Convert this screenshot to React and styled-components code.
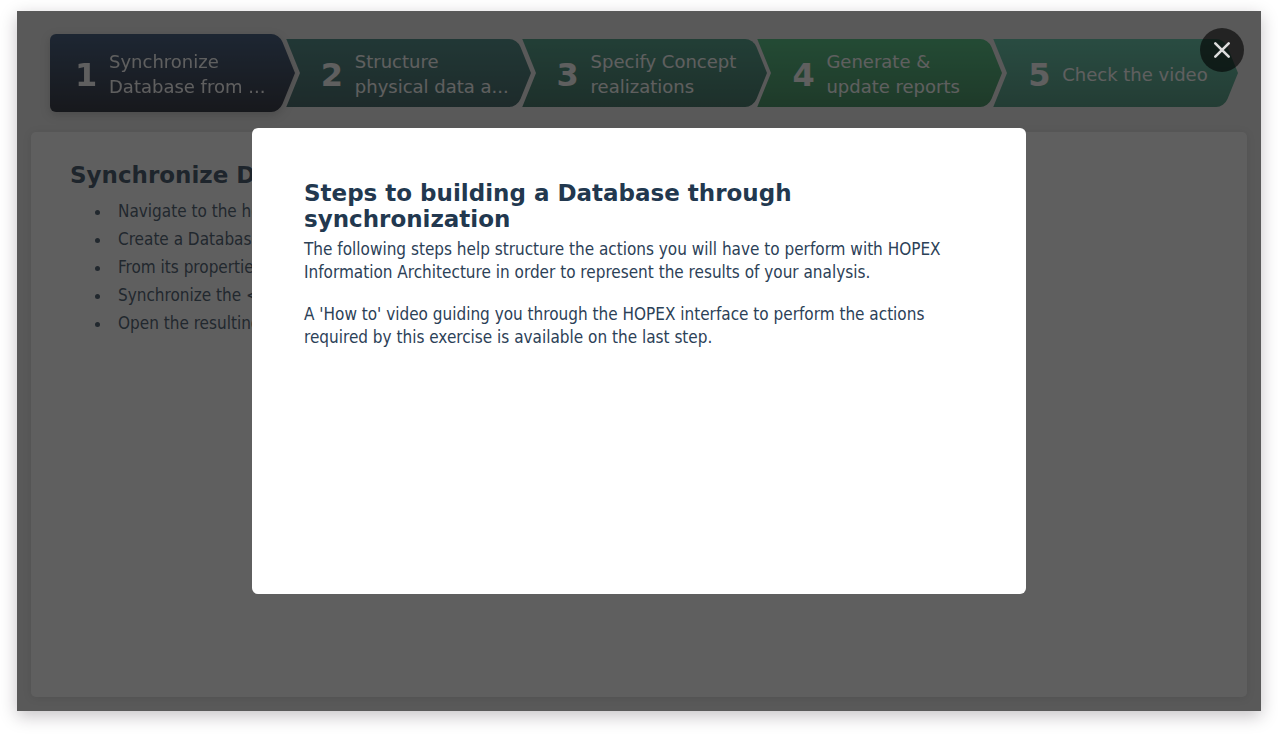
import React from "react";
import styled, { createGlobalStyle, css } from "styled-components";

const GlobalStyle = createGlobalStyle`
  * { box-sizing: border-box; }
  body {
    margin: 0;
    background: #fff;
    color: #22384f;
    font-family: Verdana, "DejaVu Sans", sans-serif;
  }
`;

const Page = styled.div`
  display: flex;
  min-height: 100vh;
  padding: 11px 17px 23px;
`;

const Frame = styled.main`
  position: relative;
  flex: 1;
  display: flex;
  flex-direction: column;
  gap: 20px;
  padding: 23px 14px 14px;
  background: #e9e9e9;
  box-shadow: 0 5px 16px rgba(30, 20, 30, 0.26);
`;

const Steps = styled.nav`
  display: grid;
  grid-template-columns: repeat(5, minmax(0, 1fr));
  align-items: center;
  gap: 5px;
  padding: 0 9px 0 33px;
`;

const half = css`
  content: "";
  position: absolute;
  z-index: -1;
  left: ${(p) => (p.$active ? "20px" : "0")};
  right: 0;
  height: 50%;
`;

const Step = styled.button`
  position: relative;
  isolation: isolate;
  height: ${(p) => (p.$active ? "78px" : "68px")};
  display: flex;
  align-items: center;
  gap: 12px;
  padding: 2px 20px 0 ${(p) => (p.$active ? "11px" : "21px")};
  border: 0;
  background: none;
  color: #fff;
  font: inherit;
  text-align: left;
  filter: ${(p) => (p.$active ? "drop-shadow(0 3px 5px rgba(0, 0, 0, 0.2))" : "none")};

  &::before {
    ${half}
    top: 0;
    background: linear-gradient(${(p) => p.$from}, ${(p) => p.$to}) 0 0 / 100% 200%;
    border-top-right-radius: 8px;
    transform: skewX(22deg);
    transform-origin: 0 100%;
  }

  &::after {
    ${half}
    bottom: 0;
    background: linear-gradient(${(p) => p.$from}, ${(p) => p.$to}) 0 100% / 100% 200%;
    border-bottom-right-radius: 8px;
    transform: skewX(-22deg);
    transform-origin: 0 0;
  }
`;

const Cap = styled.span`
  position: absolute;
  z-index: -1;
  inset: 0 auto 0 -14px;
  width: 48px;
  border-radius: 6px 0 0 6px;
  background: linear-gradient(${(p) => p.$from}, ${(p) => p.$to});
`;

const StepNumber = styled.span`
  width: 22px;
  flex: none;
  padding-top: 2px;
  font-size: 32px;
  line-height: 40px;
  font-weight: 700;
`;

const StepLabel = styled.span`
  font-size: 18px;
  line-height: 25px;
`;

const Panel = styled.section`
  flex: 1;
  padding: 30px 39px;
  border-radius: 5px;
  background: #fff;
  box-shadow: 0 1px 8px rgba(0, 0, 0, 0.12);
`;

const Title = styled.h2`
  margin: 0;
  font-size: 23px;
  line-height: 26px;
  font-weight: 700;
`;

const bodyText = css`
  color: #2c4157;
  font-family: "DejaVu Sans Condensed", "DejaVu Sans", sans-serif;
  font-size: 17px;
  line-height: 23px;
`;

const TaskList = styled.ul`
  ${bodyText}
  margin: 12px 0 0;
  padding-left: 42px;
`;

const Task = styled.li`
  margin-bottom: 5px;
  padding-left: 6px;
`;

const Overlay = styled.div`
  position: absolute;
  inset: 0;
  display: flex;
  align-items: center;
  justify-content: center;
  background: rgba(30, 30, 30, 0.71);
`;

const Dialog = styled.div`
  width: 774px;
  max-width: 90%;
  min-height: 466px;
  padding: 52px;
  border-radius: 6px;
  background: #fff;
`;

const Text = styled.p`
  ${bodyText}
  margin: 6px 0 19px;
`;

const CloseButton = styled.button`
  position: absolute;
  top: 17px;
  right: 17px;
  width: 44px;
  height: 44px;
  display: flex;
  align-items: center;
  justify-content: center;
  padding: 0;
  border: 0;
  border-radius: 50%;
  background: rgba(0, 0, 0, 0.6);
  color: #ddd;
`;

const steps = [
  { label: "Synchronize Database from ...", from: "#1e3d66", to: "#090d1b", active: true },
  { label: "Structure physical data a...", from: "#2c7871", to: "#1e4b4b" },
  { label: "Specify Concept realizations", from: "#2f9074", to: "#1e5c4b" },
  { label: "Generate & update reports", from: "#33b96d", to: "#227f47" },
  { label: "Check the video", from: "#47bd9a", to: "#33896d" },
];

const tasks = [
  "Navigate to the home",
  "Create a Database",
  "From its properties",
  "Synchronize the <Database>",
  "Open the resulting",
];

export default function App() {
  return (
    <>
      <GlobalStyle />
      <Page>
        <Frame>
          <Steps aria-label="Steps">
            {steps.map((s, i) => (
              <Step key={s.label} type="button" $active={s.active} $from={s.from} $to={s.to}>
                {s.active && <Cap $from={s.from} $to={s.to} />}
                <StepNumber>{i + 1}</StepNumber>
                <StepLabel>{s.label}</StepLabel>
              </Step>
            ))}
          </Steps>
          <Panel>
            <Title>Synchronize Database</Title>
            <TaskList>
              {tasks.map((t) => (
                <Task key={t}>{t}</Task>
              ))}
            </TaskList>
          </Panel>
          <Overlay>
            <Dialog role="dialog" aria-modal="true" aria-labelledby="dialog-title">
              <Title id="dialog-title">Steps to building a Database through synchronization</Title>
              <Text>
                The following steps help structure the actions you will have to perform with HOPEX
                Information Architecture in order to represent the results of your analysis.
              </Text>
              <Text>
                A 'How to' video guiding you through the HOPEX interface to perform the actions
                required by this exercise is available on the last step.
              </Text>
            </Dialog>
            <CloseButton type="button" aria-label="Close">
              <svg width="18" height="18" viewBox="0 0 18 18" fill="none" stroke="currentColor" strokeWidth="2.6" strokeLinecap="round">
                <path d="M2.3 2.3 L15.7 15.7 M15.7 2.3 L2.3 15.7" />
              </svg>
            </CloseButton>
          </Overlay>
        </Frame>
      </Page>
    </>
  );
}
